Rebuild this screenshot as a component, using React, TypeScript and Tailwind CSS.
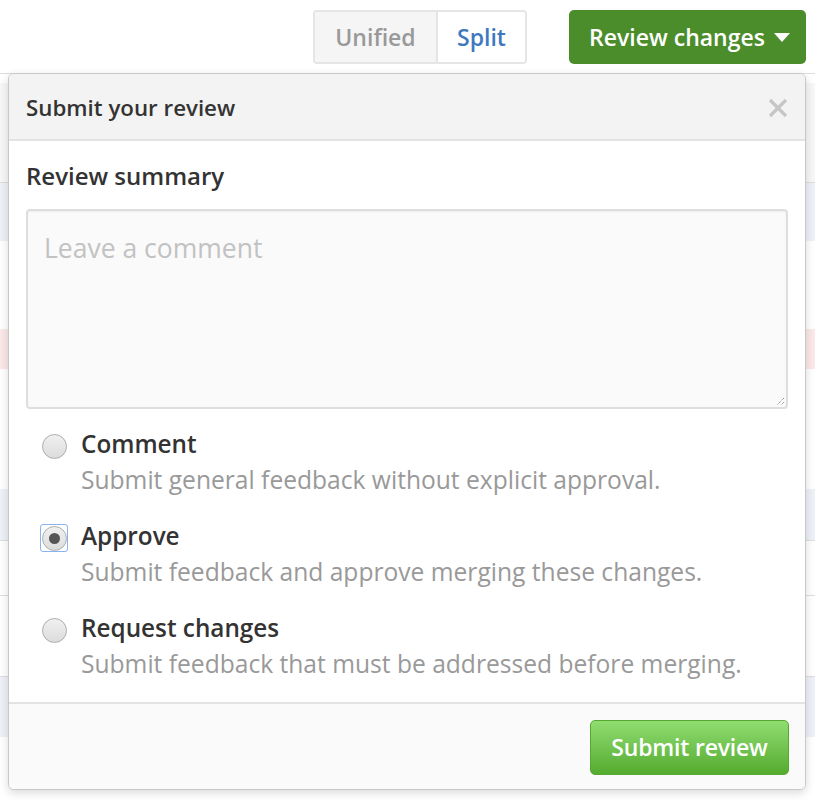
import React from "react";

// Review options shown as radio rows in the popup
const options = [
  { id: "comment", label: "Comment", desc: "Submit general feedback without explicit approval." },
  { id: "approve", label: "Approve", desc: "Submit feedback and approve merging these changes." },
  { id: "reject", label: "Request changes", desc: "Submit feedback that must be addressed before merging." },
];

function Radio({ checked }: { checked: boolean }) {
  return (
    <div
      className={
        "flex h-[28px] w-[28px] items-center justify-center rounded-[3px] border " +
        (checked ? "border-[#8ab4f0]" : "border-transparent")
      }
    >
      <div className="flex h-[25px] w-[25px] items-center justify-center rounded-full border border-[#adadad] bg-gradient-to-b from-[#f0f0f0] to-[#dcdcdc]">
        {checked && <div className="h-[11px] w-[11px] rounded-full bg-[#555]" />}
      </div>
    </div>
  );
}

export default function App() {
  return (
    <div className="relative h-[800px] w-[815px] overflow-hidden bg-white font-['Open_Sans',sans-serif] text-[#333]">
      {/* Toolbar */}
      <div className="flex h-[73px] items-start justify-end gap-[42px] pr-[9px] pt-[10px]">
        <div className="flex h-[54px] overflow-hidden rounded-[4px] border-2 border-[#e5e5e5] text-[23px] font-semibold">
          <div className="flex w-[121px] items-center justify-center bg-[#f5f5f5] text-[#999]">Unified</div>
          <div className="flex w-[89px] items-center justify-center border-l-2 border-[#e5e5e5] bg-white text-[#4078c0]">Split</div>
        </div>
        <div className="flex h-[54px] w-[237px] items-center justify-center gap-[9px] rounded-[5px] bg-[#4b8d2b] pl-[4px] text-[23px] font-semibold text-white">
          Review changes
          <svg width="16" height="9" viewBox="0 0 16 9">
            <path d="M0 0h16L8 9z" fill="#fff" />
          </svg>
        </div>
      </div>

      {/* Diff rows behind the popup */}
      <div className="flex flex-col">
        <div className="h-[10px] border-t border-[#ddd]" />
        <div className="h-[100px] border-b border-[#ddd] bg-[#f7f7f7]" />
        <div className="h-[58px] bg-[#eef2f8]" />
        <div className="h-[88px]" />
        <div className="h-[40px] bg-[#fbe9e9]" />
        <div className="h-[120px]" />
        <div className="h-[52px] border-b border-[#ddd] bg-[#eef2f8]" />
        <div className="h-[55px] border-b border-[#ddd]" />
        <div className="h-[81px] border-b border-[#ddd]" />
        <div className="h-[60px] bg-[#eef2f8]" />
      </div>

      {/* Review popup */}
      <div className="absolute left-[8px] top-[73px] flex w-[798px] flex-col overflow-hidden rounded-[6px] border border-[#c8c8c8] bg-white shadow-[0_3px_10px_rgba(0,0,0,0.15)]">
        <div className="flex h-[67px] items-center justify-between border-b-2 border-[#e3e3e3] bg-[#f3f3f3] pl-[17px] pr-[17px] pt-[3px]">
          <span className="text-[22.3px] font-semibold">Submit your review</span>
          <svg width="20" height="20" viewBox="0 0 20 20">
            <path d="M2 2L18 18M18 2L2 18" stroke="#c6c6c6" strokeWidth="3.2" />
          </svg>
        </div>

        <div className="flex flex-col px-[17px] pt-[19px]">
          <div className="text-[24px] font-semibold leading-[32px]">Review summary</div>
          <div className="relative mt-[17px] h-[200px] rounded-[4px] border-2 border-[#dedede] bg-[#fafafa] px-[16px] pt-[18px] text-[26.5px] text-[#c2c2c2] shadow-[inset_0_1px_2px_rgba(0,0,0,0.05)]">
            Leave a comment
            {/* resize grip */}
            <svg className="absolute bottom-[1px] right-[1px]" width="10" height="10" viewBox="0 0 10 10">
              <path d="M9 2L2 9M9 6L6 9" stroke="#777" strokeWidth="1" strokeDasharray="1 1" />
            </svg>
          </div>

          <div className="mt-[18px] flex flex-col gap-[20px] pb-[19px]">
            {options.map((o) => (
              <div key={o.id} className="flex gap-[13px] pl-[14px]">
                <div className="pt-[5px]">
                  <Radio checked={o.id === "approve"} />
                </div>
                <div className="flex flex-col">
                  <span className="text-[24.3px] font-semibold leading-[34px]">{o.label}</span>
                  <span className="text-[24.6px] leading-[38px] text-[#999]">{o.desc}</span>
                </div>
              </div>
            ))}
          </div>
        </div>

        <div className="flex h-[87px] items-start justify-end border-t-2 border-[#e3e3e3] bg-[#fafafa] pr-[16px] pt-[16px]">
          <div className="flex h-[55px] w-[199px] items-center justify-center rounded-[5px] border border-[#56a832] bg-gradient-to-b from-[#90dd70] to-[#54ab2d] text-[23px] font-semibold tracking-[-0.2px] text-white">
            Submit review
          </div>
        </div>
      </div>
    </div>
  );
}
